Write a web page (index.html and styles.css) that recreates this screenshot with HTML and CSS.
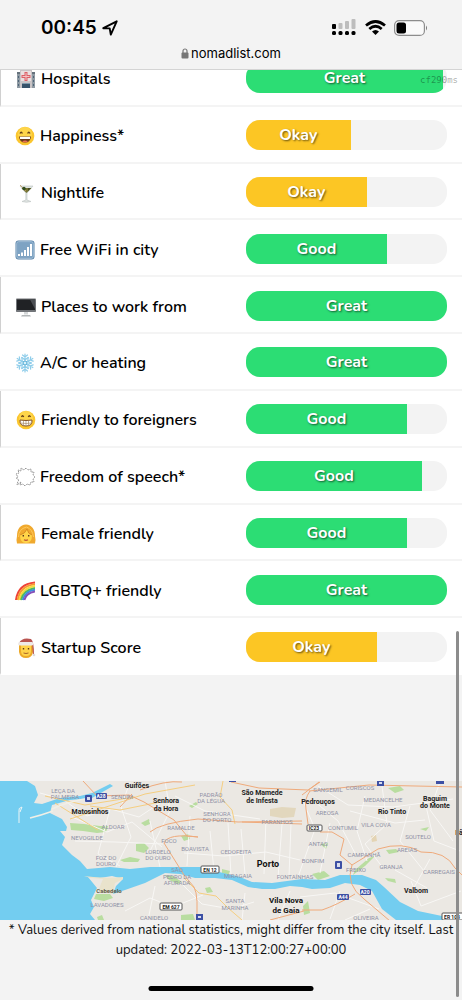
FILE: index.html
```html
<!DOCTYPE html>
<html lang="en">
<head>
<meta charset="utf-8">
<meta name="viewport" content="width=device-width, initial-scale=1">
<title>nomadlist.com</title>
<link rel="stylesheet" href="styles.css">
</head>
<body>
<header class="browser">
  <div class="status">
    <div class="clock">00:45
      <svg width="16" height="16" viewBox="0 0 16 16" aria-hidden="true"><path d="M1.3 8.2 14.7 1.3 8.8 14.6 7.7 8.4z" fill="none" stroke="#000" stroke-width="1.9" stroke-linejoin="round"/></svg>
    </div>
    <div class="indicators">
      <svg width="25" height="17" viewBox="0 0 25 17" aria-hidden="true"><g fill="#bdbdbd"><rect x="6.500" y="4" width="4" height="6" rx="1"/><rect x="13" y="2" width="4" height="8" rx="1"/><rect x="19.500" y="0" width="4" height="10" rx="1"/></g><rect y="5" width="4" height="5" rx="1"/><rect y="12" width="4" height="4" rx="1.500"/><rect x="6.500" y="12" width="4" height="4" rx="1.500"/><rect x="13" y="12" width="4" height="4" rx="1.500"/><rect x="19.500" y="12" width="4" height="4" rx="1.500"/></svg>
      <svg width="21" height="16" viewBox="0 0 21 16" aria-hidden="true"><g fill="none" stroke="#000" stroke-width="2.700"><path d="M1 5.600Q10.500-2.600 20 5.600M4.300 9Q10.500 3.500 16.700 9"/></g><path d="M7 11.400Q10.500 8.400 14 11.400L10.500 15z"/></svg>
      <svg width="34" height="16" viewBox="0 0 34 16" aria-hidden="true"><rect x=".6" y=".6" width="29.800" height="14.800" rx="4.500" fill="#fafafa" stroke="#8d8d8d" stroke-width="1.200"/><rect x="2.500" y="2.500" width="9.500" height="11" rx="2.500"/><path d="M32 5.500q2 2.500 0 5z" fill="#777"/></svg>
    </div>
  </div>
  <div class="address">
    <svg width="8" height="11" viewBox="0 0 8 11" aria-hidden="true"><path d="M2 5V3a2 2 0 0 1 4 0v2" fill="none" stroke="#777" stroke-width="1.200"/><rect x=".5" y="4.600" width="7" height="6" rx="1" fill="#777"/></svg>
    <span>nomadlist.com</span>
  </div>
</header>

<main>
  <div class="timing">cf290ms</div>
  <table class="scores">
    <tbody>
    <tr><th scope="row"><div class="label"><svg class="emoji" viewBox="0 0 20 20" aria-hidden="true"><path d="M1 4h18v15H1z" fill="#8f9aa3"/><path d="M1 3h4v2H1zM15 3h4v2h-4z" fill="#66727c"/><path d="M4 1h12v18H4z" fill="#c9c4c6"/><path d="M5 2h10v10H5z" fill="#eadfe0"/><path d="M8.500 3h3v3h3v3h-3v3h-3V9h-3V6h3z" fill="#dc5f66"/><path d="M10 4v7M6.500 7.500h7" stroke="#f3c3c5"/><path d="M2 7h1v2H2zm0 4h1v2H2zm0 4h1v2H2zm15-8h1v2h-1zm0 4h1v2h-1zm0 4h1v2h-1z" fill="#4e6478"/><path d="M6 14h8v5H6z" fill="#36536a"/><path d="M6 14h8v1H6z" fill="#7f99aa"/></svg>Hospitals</div></th><td><div class="track"><div class="fill good" style="width:98%">Great</div></div></td></tr>
    <tr><th scope="row"><div class="label"><svg class="emoji" viewBox="0 0 20 20" aria-hidden="true"><circle cx="10" cy="10" r="9.300" fill="#fbc62f"/><circle cx="10" cy="8" r="7" fill="#ffdc55" opacity=".7"/><path d="M5 7.500q1.200-2.500 2.400 0M12.600 7.500q1.200-2.500 2.400 0" fill="none" stroke="#65401a" stroke-width="1.300"/><path d="M4 10.500h12q-.5 6-6 6t-6-6z" fill="#6b3b1b"/><path d="M5 10.800h10v2.200H5z" fill="#fff"/><path d="M7 15.500q3-2 6 0-3 1.500-6 0z" fill="#e86a56"/></svg>Happiness*</div></th><td><div class="track"><div class="fill okay" style="width:52%">Okay</div></div></td></tr>
    <tr><th scope="row"><div class="label"><svg class="emoji" viewBox="0 0 20 20" aria-hidden="true"><path d="M4 3h13l-6 7v7l4 1.500q-4.500 1.500-9 0L9.800 17v-7z" fill="#dfe4e2" stroke="#bdc4c2" stroke-width=".6"/><path d="M5.500 5h10l-5 5z" fill="#747332"/><path d="M4 2l6 6" stroke="#bd9658" stroke-width=".8"/><circle cx="8" cy="5.500" r="1.700" fill="#314d20"/><path d="M12 5h3l-3 3z" fill="#454c26"/></svg>Nightlife</div></th><td><div class="track"><div class="fill okay" style="width:60%">Okay</div></div></td></tr>
    <tr><th scope="row"><div class="label"><svg class="emoji" viewBox="0 0 20 20" aria-hidden="true"><rect x=".5" y=".5" width="19" height="19" rx="3" fill="#5883aa"/><rect x="1.600" y="1.600" width="16.800" height="16.800" rx="2" fill="#7ea3c3" stroke="#b0c9dc" stroke-width=".7"/><path d="M3 14h2v2H3zm3-1.500h2V16H6zM9 10h2v6H9zm3-3h2v9h-2zm3-3h2v12h-2z" fill="#fff"/></svg>Free WiFi in city</div></th><td><div class="track"><div class="fill good" style="width:70%">Good</div></div></td></tr>
    <tr><th scope="row"><div class="label"><svg class="emoji" viewBox="0 0 20 20" aria-hidden="true"><rect y="1.500" width="20" height="13.500" rx=".8" fill="#727579"/><path d="M1 2.500h18v10.500H1z" fill="#202225"/><path d="M14 2.500h5V12z" fill="#4b4e53"/><path d="M8 15h4v2.500H8z" fill="#d5d8d9"/><path d="M6 18h8l1 1.500H5z" fill="#b4b8ba"/></svg>Places to work from</div></th><td><div class="track"><div class="fill good" style="width:100%">Great</div></div></td></tr>
    <tr><th scope="row"><div class="label"><svg class="emoji" viewBox="0 0 20 20" aria-hidden="true"><g fill="none" stroke="#8fcdea" stroke-width="1.200" stroke-linecap="round"><path id="arm" d="M10 9V1M7.500 2l2.500 2 2.500-2M7 4.500l3 2.500 3-2.500"/><use href="#arm" transform="rotate(60 10 10)"/><use href="#arm" transform="rotate(120 10 10)"/><use href="#arm" transform="rotate(180 10 10)"/><use href="#arm" transform="rotate(240 10 10)"/><use href="#arm" transform="rotate(300 10 10)"/></g><circle cx="10" cy="10" r="2" fill="#d9f2fb" stroke="#4fa9d3"/></svg>A/C or heating</div></th><td><div class="track"><div class="fill good" style="width:100%">Great</div></div></td></tr>
    <tr><th scope="row"><div class="label"><svg class="emoji" viewBox="0 0 20 20" aria-hidden="true"><circle cx="10" cy="10" r="9.300" fill="#fbc62f"/><circle cx="10" cy="8" r="7" fill="#ffdc55" opacity=".7"/><path d="M5.500 7q1-2.500 2.200 0M12.300 7q1-2.500 2.200 0" fill="none" stroke="#65401a" stroke-width="1.300"/><path d="M4 10q6 1 12 0 .5 6-6 6T4 10z" fill="#fff" stroke="#80522a"/><path d="M4.500 13q5.500 1 11 0M7.500 11v4M10 11v5M12.500 11v4" fill="none" stroke="#a98e6b" stroke-width=".7"/></svg>Friendly to foreigners</div></th><td><div class="track"><div class="fill good" style="width:80%">Good</div></div></td></tr>
    <tr><th scope="row"><div class="label"><svg class="emoji" viewBox="0 0 20 20" aria-hidden="true"><path d="M6 15 2 18l1-4 1-1-3-2 2-1-2-3 3-1-1-3 3 1V1l3 2 2-2 2 2 3-1v3l3 0-1 3 2 2-2 2 1 3-3 0-1 3-3-1-2 2-2-2-3 1z" fill="#fff" stroke="#959595" stroke-width="1" stroke-dasharray="1.500 .7"/></svg>Freedom of speech*</div></th><td><div class="track"><div class="fill good" style="width:87.500%">Good</div></div></td></tr>
    <tr><th scope="row"><div class="label"><svg class="emoji" viewBox="0 0 20 20" aria-hidden="true"><path d="M1 19.500Q0 16 1 12C1 5 4 1 10 .5c6 .5 9 5 9 11.500q1 4 0 7.500z" fill="#f0a92e"/><path d="M4 11q5-1 7-6 1 5 5 6 0 8-6 8t-6-8z" fill="#ffd449"/><path d="M7.300 11v1.500M12.700 11v1.500" stroke="#5e3a1c" stroke-width="1.400"/><path d="M8 15.800q2 1 4 0" stroke="#bd5237" fill="none" stroke-width="1.200"/><path d="M2.500 13q0-8 8-10 6 2 7 10" stroke="#ffc95a" fill="none"/><path d="M4 11q5-1 7-6 1 5 5 6" stroke="#cc7d1e" fill="none" stroke-width=".7"/></svg>Female friendly</div></th><td><div class="track"><div class="fill good" style="width:80%">Good</div></div></td></tr>
    <tr><th scope="row"><div class="label"><svg class="emoji" viewBox="0 0 20 20" aria-hidden="true"><g fill="none" stroke-width="2"><path d="M1 19Q3 3 20 1.500" stroke="#ee4338"/><path d="M2.700 19Q5 5 20 3.300" stroke="#f79a32"/><path d="M4.400 19Q7 7 20 5.100" stroke="#f5da3c"/><path d="M6 19Q8 9 20 6.900" stroke="#52bd57"/><path d="M7.700 19Q10 10 20 8.700" stroke="#3b8ee0"/><path d="M9.300 19Q11 12 20 10.400" stroke="#8550b8"/></g></svg>LGBTQ+ friendly</div></th><td><div class="track"><div class="fill good" style="width:100%">Great</div></div></td></tr>
    <tr><th scope="row"><div class="label"><svg class="emoji" viewBox="0 0 20 20" aria-hidden="true"><path d="M3 7h14v7q-1 6-7 6t-7-6z" fill="#eca928"/><path d="M5 7h10v6q0 5-5 5t-5-5z" fill="#ffd34a"/><path d="M3 5q3-6 12-4 3 2 3 16h-1L16 5z" fill="#b95450"/><rect x="2" y="4" width="15.500" height="3.500" rx="1.700" fill="#eeeae8"/><circle cx="18" cy="17" r="1.300" fill="#ddd"/><path d="M7.500 10v1.500M12.500 10v1.500" stroke="#5e3a1c" stroke-width="1.400"/><path d="M7.500 15q2.500 1 5 0" stroke="#a96429" fill="none"/></svg>Startup Score</div></th><td><div class="track"><div class="fill okay" style="width:65%">Okay</div></div></td></tr>
    </tbody>
  </table>

  <svg class="map" viewBox="0 0 462 139" role="img" aria-label="Map of Porto">
    <rect width="462" height="139" fill="#ebe8e3"/>
    <g fill="#b9dda0">
      <path d="M70 42l14 1 16 2 8 0-2 6-9 1-14-2-12-1z"/>
      <path d="M136 63l8-1 5 5-5 5-8-2zM120 79l10-3 10 2-2 3-14 0zM141 42l8-4 1 5-5 2zM181 55l8-2 1 5-6 2zM189 25l7-4 2 2-6 4zM222 88l8 2-2 5-6-2zM165 94l8 1 9 6-4 2-9-4zM205 107l5-1 3 5-6 1z"/>
      <path d="M388 7l12-2 4 4-9 3zM386 69l10-1 3 3-10 2zM312 93l12-3 6 5-12 4zM385 97l10 1 1 4-8-2zM420 48l9-2-3 4zM320 63l8-1-2 6zM303 125l5-5 2 12-6 2zM181 134l12-1 2 6h-14zM97 136l5-2 2 5h-6zM355 89l14-12 6-2-10 10-12 9z"/>
    </g>
    <path d="M270 28l12-2 14 1-2 9-12 1-12-2z" fill="#e2d7bd"/>
    <path d="M371 55l5-1 1 6-5 1z" fill="#e4d4b4"/>
    <g class="street">
      <path d="M40 12l22 6 25 17 24-7 28 8 30-20M72 36l35 15 25-10 30 25M75 60l40 1 48 2M110 28l-12 45 22 12M130 1l-9 25 10 30-15 30M150 40l10 46M165 0l5 30-20 40M190 35l-3 50M175 15l30 15 55 8M210 50l4 40M228 42l3 52M241 48l4 45M184 72l40 3 42-4 34 8M266 38l-2 55M282 43l-4 54M291 43l-2 52M303 20l12 28-17 48M314 20l24 20 18 34M330 42l-10 50M365 15l-8 35 10 30M382 5l5 38-22 20 18 24M410 25l-10 35 24 30M426 25l8 35 26 10M440 1l-10 28 23 31M350 30l45 12 30-3M318 5l30 19 45 2 60-8M125 130l25-13 23 9 30-12M155 105l-7 34M180 101l22 22 29 5 23-7M245 112l-3 27M290 110l-12 29M300 116l35-4 44 16M340 110l-10 28M370 128l-25 11M411 100l10 25 40-15M430 78l-18 32M395 89l32 18"/>
    </g>
    <path class="water" d="M0 0H27L35 5 38 14 34 22 42 23 60 17 80 15 92 12 110 3 113 5 92 17 70 19 52 24 50 32 62 38 67 46 66 50 60 50 65 56 62 64 72 74 80 80 87 88 110 86 130 88 150 86 180 86 200 86 215 90 240 96 252 101 272 102 302 98 325 99 340 94 362 94 376 99 384 106 400 121 418 130 442 135V139H396L382 128 372 110 360 104 345 102 330 107 312 108 302 106 290 105 275 108 262 108 248 106 232 99 215 97 195 97 180 93 165 92 145 102 125 109 113 113 116 105 123 98 112 95 100 97 88 96 97 107 91 119 94 126 90 133 95 139H0z"/>
    <g class="road-yellow"><path d="M223 0l-3 16 12 13 3 14M45 15l40 9 50-8M70 38l75-25 50-9M184 97l15 15 17 3 12 12 14 12M90 25l30 4 40-8M55 22l43 27"/></g>
    <g class="road-orange"><path d="M83 0l14 15 32-1 15 7 30 18 13 16 11 1M120 26l12-13M140 9q25-10 42-8M231 1l28 6 49 2 12-8M150 51q10-9 48-13l40 3 64-1M310 10q-6 8-4 18l2 15M302 14l17-13M302 43l-60-2M198 56q-30-4-34 6l10 16 10 16 10 12q5 9 2 39M309 10l60-6 93 2M320 51h12l12 7-4 16 12 10 26-16q25-8 43 3 25-1 34 16l7 7M352 84q-7 20 12 34l26 22M302 129h20q15-5 33-16M270 139l34-9"/></g>
    <path d="M30 37q12-3 23-7M52 28q14-7 38-11" fill="none" stroke="#f1efe6" stroke-width="1.500"/>
    <path d="M19 42V30q-1-3 3-4l-2 5" fill="none" stroke="#edf4f5"/>
    <path d="M84 95q20 3 39 1v2l-8 4-2 11-15-3 5-12-12-1z" fill="#e9e3cc"/>
    <path d="M96 113l14 0 3 4-9 3-10-2z" fill="#b9dda0"/>
    <g class="district">
      <text x="63" y="12">LEÇA DA</text><text x="65" y="18">PALMEIRA</text><text x="122" y="18">SENDIM</text><text x="113" y="48">ALDOAR</text><text x="87" y="59">NEVOGILDE</text><text x="106" y="79">FOZ DO</text><text x="106" y="85">DOURO</text><text x="158" y="73">LORDELO</text><text x="158" y="79">DO OURO</text><text x="211" y="16">PADRÃO</text><text x="211" y="22">DA LÉGUA</text><text x="217" y="35">SENHORA</text><text x="217" y="41">DO PORTO</text><text x="181" y="49">RAMALDE</text><text x="169" y="62">FOCO</text><text x="195" y="70">BOAVISTA</text><text x="236" y="73">CEDOFEITA</text><text x="277" y="43">PARANHOS</text><text x="177" y="91">SÃO</text><text x="177" y="98">PEDRO DA</text><text x="177" y="104">AFURADA</text><text x="238" y="97">MIRAGAIA</text><text x="235" y="122">SANTA</text><text x="235" y="129">MARINHA</text><text x="295" y="98">FONTAÍNHAS</text><text x="107" y="126">LAVADORES</text><text x="154" y="139">CANIDELO</text><text x="328" y="11">SANGEMIL</text><text x="360" y="9">CORISCOS</text><text x="383" y="21">MEDANCELHE</text><text x="327" y="34">AREOSA</text><text x="343" y="49">CONTUMIL</text><text x="376" y="46">VILA COVA</text><text x="418" y="58">SOUTELO</text><text x="318" y="65">ANTAS</text><text x="364" y="76">CAMPANHÃ</text><text x="407" y="71">AREIAS</text><text x="313" y="82">BONFIM</text><text x="356" y="91">FREIXO</text><text x="391" y="88">GRANJA</text><text x="439" y="93">CARREGAIS</text><text x="366" y="139">OLIVEIRA</text>
    </g>
    <g class="town">
      <text x="137" y="7">Guifões</text><text x="90" y="33">Matosinhos</text><text x="166" y="22">Senhora</text><text x="166" y="30">da Hora</text><text x="262" y="14">São Mamede</text><text x="262" y="22">de Infesta</text><text x="318" y="23">Pedrouços</text><text x="392" y="33">Rio Tinto</text><text x="435" y="20">Baguim</text><text x="435" y="27">do Monte</text><text x="416" y="112">Valbom</text><text x="459" y="54">Fâ</text><text x="109" y="112" class="minor">Cabedelo</text>
    </g>
    <g class="city"><text x="268" y="86">Porto</text></g>
    <g class="vila"><text x="286" y="122">Vila Nova</text><text x="286" y="132">de Gaia</text></g>
    <g fill="#3d50a4"><rect x="85" y="14" width="7" height="7" rx="1"/><rect x="96" y="12" width="11" height="6" rx="1"/><rect x="335" y="80" width="7" height="8" rx="1"/><rect x="360" y="108" width="11" height="6" rx="1"/><rect x="337" y="113" width="12" height="6" rx="1"/><rect x="196" y="133" width="7" height="6"/><rect x="377" y="0" width="7" height="5"/><rect x="436" y="0" width="8" height="3"/><rect x="229" y="0" width="7" height="1"/></g>
    <g fill="#fff" opacity=".8"><path d="M87 16h3v3h-3zM337 82h3v4h-3zM198 135h3v2h-3zM379 1h3v2h-3z"/></g>
    <g class="plate"><rect x="201" y="85" width="18" height="7" rx="1"/><rect x="160" y="122" width="22" height="7" rx="1"/><rect x="307" y="44" width="15" height="6" rx="1"/><rect x="442" y="132" width="22" height="7" rx="1"/></g>
    <g class="code"><text x="210" y="91">EN 12</text><text x="171" y="128">EM 627</text><text x="314" y="49">IC23</text><text x="452" y="138">ER 108</text></g>
    <g class="code white"><text x="101" y="17">A28</text><text x="365" y="113">A20</text><text x="343" y="118">A44</text></g>
  </svg>
  <p class="note">* Values derived from national statistics, might differ from the city itself. Last updated: 2022-03-13T12:00:27+00:00</p>
</main>
<div class="scrollbar"></div>
<div class="home"></div>
</body>
</html>
```
FILE: styles.css
```css
* { box-sizing: border-box; }
body {
  margin: 0;
  background: #f3f3f3;
  color: #111;
  font-family: Nunito, Lato, sans-serif;
}
.browser {
  position: relative;
  z-index: 2;
  height: 70px;
  padding-top: 15px;
  background: #f3f3f3;
  border-bottom: 1px solid #d4d4d4;
  color: #000;
  font-family: Inter, sans-serif;
}
.status {
  display: flex;
  justify-content: space-between;
  align-items: center;
  height: 25px;
  padding: 0 34px 0 41px;
}
.clock {
  display: flex;
  align-items: center;
  gap: 5px;
  font-size: 19px;
  font-weight: 600;
}
.indicators {
  display: flex;
  align-items: center;
  gap: 8px;
}
.address {
  display: flex;
  justify-content: center;
  align-items: center;
  gap: 2px;
  height: 26px;
  font-size: 13px;
}
main { position: relative; }
.timing {
  position: absolute;
  z-index: 1;
  top: 24px;
  right: 4px;
  color: rgba(0, 0, 0, 0.35);
  font: 9px/12px "DejaVu Sans Mono", monospace;
}
.scores {
  width: 100%;
  height: 625px;
  margin-top: -20px;
  border-spacing: 0;
  table-layout: fixed;
  background: #fff;
}
.scores th,
.scores td {
  padding: 2px 15px 0;
  border-bottom: 2px solid #f4f4f4;
  text-align: left;
}
.scores th { padding-top: 4px; }
.scores tr:nth-child(odd) th { border-left: 1px solid #d0d0d0; }
.scores tr:last-child > * { border-bottom-color: #fff; }
.label {
  display: flex;
  align-items: center;
  gap: 5px;
  color: #000;
  font-size: 16px;
  font-weight: 600;
  line-height: 22px;
  white-space: nowrap;
}
.emoji {
  width: 20px;
  height: 20px;
  flex: none;
}
.track {
  height: 30px;
  overflow: hidden;
  border-radius: 14px;
  background: #f3f3f3;
}
.fill {
  height: 100%;
  color: #fff;
  font-size: 16px;
  font-weight: 700;
  line-height: 30px;
  text-align: center;
  text-shadow: 1px 1px 2px rgba(0, 0, 0, 0.6);
}
.good { background: #2cdd74; }
.okay { background: #fcc624; }
.map {
  display: block;
  width: 100%;
  margin-top: 106px;
  font-family: Roboto, sans-serif;
  text-anchor: middle;
}
.street { fill: none; stroke: #f8f7f5; stroke-width: 1; }
.road-yellow { fill: none; stroke: #f5ce80; stroke-width: 1; }
.road-orange { fill: none; stroke: #efaa7b; stroke-width: 1; }
.water { fill: #73cdf0; }
.district { fill: #8f91a5; font-size: 6px; }
.town { fill: #222; font-size: 7px; font-weight: 700; }
.town .minor { fill: #655f4b; font-size: 6px; }
.city { fill: #111; font-size: 9px; font-weight: 700; }
.vila { fill: #111; font-size: 8px; font-weight: 700; }
.plate { fill: #fff; stroke: #555; stroke-width: 1; }
.code { fill: #222; font-size: 5px; font-weight: 700; }
.code.white { fill: #fff; }
.note {
  margin: 0;
  padding: 0 4px;
  font-size: 13px;
  line-height: 20px;
  text-align: center;
}
.scrollbar {
  position: fixed;
  top: 631px;
  right: 3px;
  bottom: 3px;
  z-index: 3;
  width: 3px;
  border-radius: 2px;
  background: #8c8c8c;
}
.home {
  position: fixed;
  bottom: 9px;
  left: 50%;
  width: 165px;
  height: 5px;
  border-radius: 3px;
  background: #000;
  transform: translateX(-50%);
}
```
